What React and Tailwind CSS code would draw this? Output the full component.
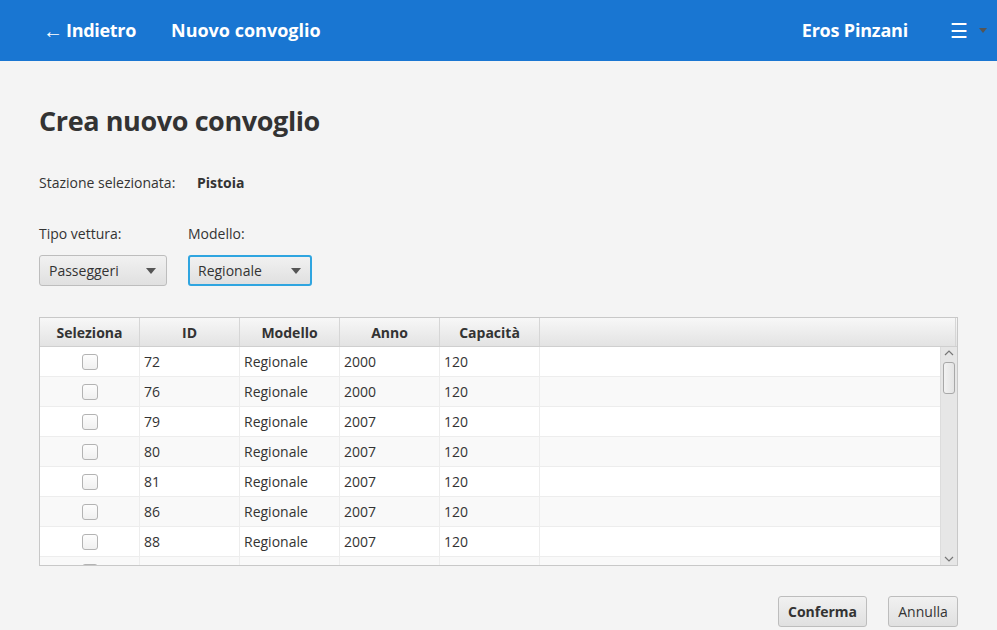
import React from "react";

const rows = [
  ["72", "Regionale", "2000", "120"],
  ["76", "Regionale", "2000", "120"],
  ["79", "Regionale", "2007", "120"],
  ["80", "Regionale", "2007", "120"],
  ["81", "Regionale", "2007", "120"],
  ["86", "Regionale", "2007", "120"],
  ["88", "Regionale", "2007", "120"],
  ["", "", "", ""],
];

function Combo({ label, width, focused }) {
  return (
    <div
      className={
        "flex items-center justify-between h-[31px] rounded-[3px] text-[14px] text-[#333] bg-gradient-to-b from-[#f1f1f1] to-[#e0e0e0] " +
        (focused
          ? "border-2 border-[#2fa5e0] pl-[8px] pr-[9px]"
          : "border border-[#bdbdbd] pl-[9px] pr-[10px]")
      }
      style={{ width }}
    >
      <span>{label}</span>
      <svg width="10" height="6" viewBox="0 0 10 6">
        <path d="M0 0 L10 0 L5 6 Z" fill="#555" />
      </svg>
    </div>
  );
}

function Checkbox() {
  return (
    <div className="w-[16px] h-[16px] rounded-[3px] border border-[#b3b3b3] bg-gradient-to-b from-[#fdfdfd] to-[#f0f0f0]" />
  );
}

export default function App() {
  return (
    <div
      className="w-[997px] h-[630px] bg-[#f4f4f4] overflow-hidden text-[#333]"
      style={{ fontFamily: '"Open Sans", "Noto Sans", sans-serif' }}
    >
      <header className="h-[61px] bg-[#1976d2] flex items-center text-white font-bold text-[18px]">
        <div className="pl-[43px] w-[171px] flex items-center">
          <span className="text-[20px] font-normal mr-[3px] leading-none">←</span>
          <span className="tracking-[-0.3px]">Indietro</span>
        </div>
        <div>Nuovo convoglio</div>
        <div className="ml-auto pr-[42px] tracking-[-0.2px]">Eros Pinzani</div>
        <div className="flex items-center gap-[11px] pr-[10px]">
          <span className="text-[20px] font-normal leading-none">☰</span>
          <svg width="8" height="5" viewBox="0 0 8 5">
            <path d="M0 0 L8 0 L4 5 Z" fill="#555" />
          </svg>
        </div>
      </header>

      <main className="px-[39px]">
        <h1 className="mt-[40px] h-[40px] leading-[40px] text-[27px] font-bold text-[#333] tracking-[-0.4px]">
          Crea nuovo convoglio
        </h1>

        <div className="mt-[31px] flex items-center h-[20px] text-[14px]">
          <span className="w-[158px]">Stazione selezionata:</span>
          <span className="font-bold">Pistoia</span>
        </div>

        <div className="mt-[32px] flex gap-[21px]">
          <div className="flex flex-col">
            <div className="h-[20px] leading-[20px] text-[14px]">Tipo vettura:</div>
            <div className="mt-[11px]">
              <Combo label="Passeggeri" width={128} />
            </div>
          </div>
          <div className="flex flex-col">
            <div className="h-[20px] leading-[20px] text-[14px]">Modello:</div>
            <div className="mt-[11px]">
              <Combo label="Regionale" width={124} focused />
            </div>
          </div>
        </div>

        <div className="mt-[31px] h-[249px] border border-[#c8c8c8] bg-white flex flex-col">
          <div className="h-[29px] flex bg-gradient-to-b from-[#f7f7f7] to-[#e3e3e3] border-b border-[#cfcfcf] text-[14px] font-bold">
            {["Seleziona", "ID", "Modello", "Anno", "Capacità"].map((h) => (
              <div
                key={h}
                className="w-[100px] flex items-center justify-center border-r border-[#d6d6d6]"
              >
                {h}
              </div>
            ))}
            <div className="flex-1 border-r border-[#d6d6d6] mr-[1px]" />
          </div>
          <div className="flex flex-1 overflow-hidden">
            <div className="flex-1 overflow-hidden">
              {rows.map((r, i) => (
                <div
                  key={i}
                  className={
                    "h-[30px] flex text-[14px] border-b border-[#ededed] " +
                    (i % 2 === 1 ? "bg-[#f9f9f9]" : "bg-white")
                  }
                >
                  <div className="w-[100px] flex items-center justify-center border-r border-[#ededed]">
                    <Checkbox />
                  </div>
                  {r.map((c, j) => (
                    <div
                      key={j}
                      className="w-[100px] flex items-center pl-[4px] border-r border-[#ededed]"
                    >
                      {c}
                    </div>
                  ))}
                </div>
              ))}
            </div>
            <div className="w-[17px] bg-[#e6e6e6] border-l border-[#dcdcdc] flex flex-col items-center">
              <svg width="10" height="6" viewBox="0 0 10 6" className="mt-[3px]">
                <path d="M1 5 L5 1 L9 5" stroke="#777" strokeWidth="1.2" fill="none" />
              </svg>
              <div className="mt-[6px] w-[12px] h-[32px] rounded-[3px] border border-[#a8a8a8] bg-gradient-to-r from-[#f2f2f2] to-[#e4e4e4]" />
              <div className="flex-1" />
              <svg width="10" height="6" viewBox="0 0 10 6" className="mb-[3px]">
                <path d="M1 1 L5 5 L9 1" stroke="#777" strokeWidth="1.2" fill="none" />
              </svg>
            </div>
          </div>
        </div>

        <div className="mt-[30px] flex justify-end gap-[21px]">
          <button className="h-[31px] w-[89px] rounded-[3px] border border-[#bdbdbd] bg-gradient-to-b from-[#f1f1f1] to-[#e0e0e0] text-[14px] font-bold text-[#333]">
            Conferma
          </button>
          <button className="h-[31px] w-[70px] rounded-[3px] border border-[#bdbdbd] bg-gradient-to-b from-[#f1f1f1] to-[#e0e0e0] text-[14px] text-[#333]">
            Annulla
          </button>
        </div>
      </main>
    </div>
  );
}
